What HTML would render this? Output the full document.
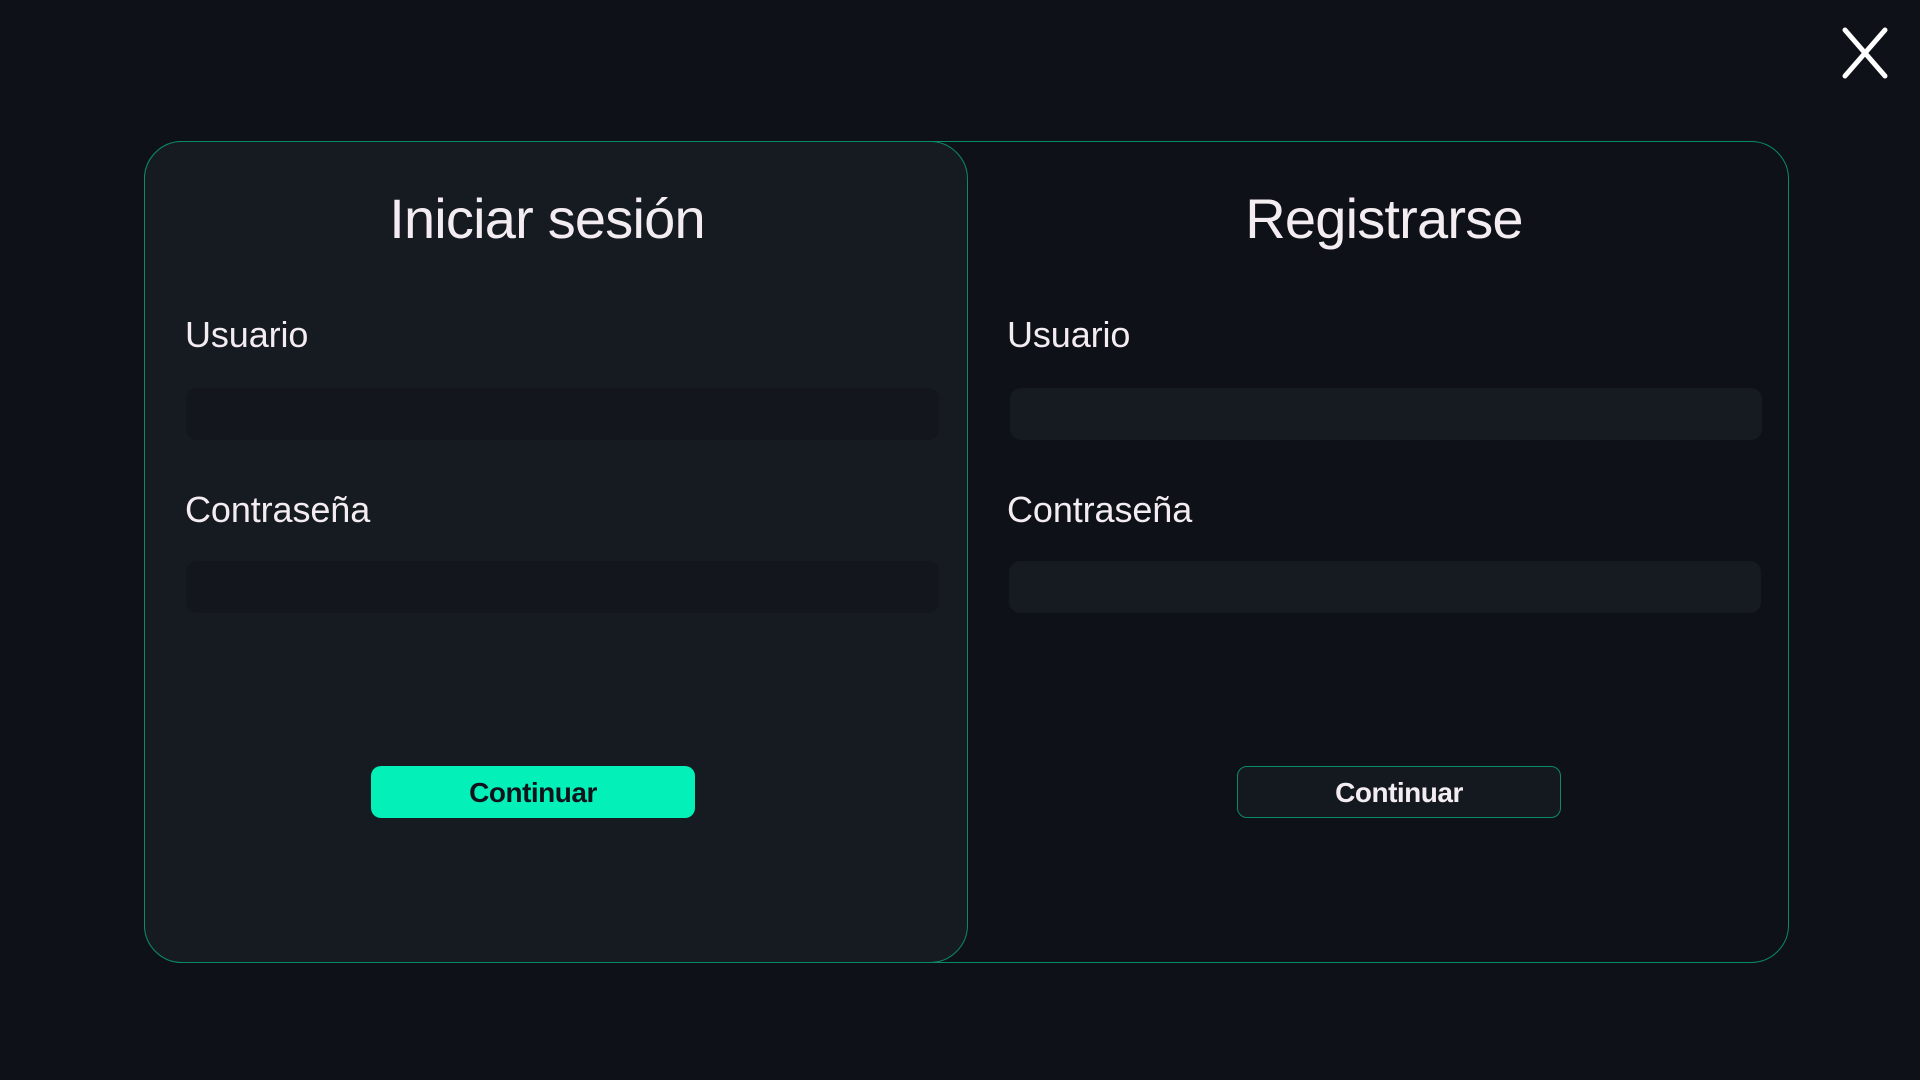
<!DOCTYPE html>
<html><head><meta charset="utf-8"><style>
*{margin:0;padding:0;box-sizing:border-box}
body{width:1920px;height:1080px;background:#0e1118;font-family:"Liberation Sans",sans-serif;color:#f3ecf1;position:relative;overflow:hidden}
.outer{position:absolute;left:144px;top:141px;width:1645px;height:822px;border:1.5px solid #0b8a66;border-radius:38px}
.left{position:absolute;left:144px;top:141px;width:824px;height:822px;background:#161a21;border:1.5px solid #0b8a66;border-radius:38px}
.t{position:absolute;font-size:56px;transform:translateX(-50%);white-space:nowrap;top:186px;letter-spacing:-0.8px}
.l{position:absolute;font-size:36px;white-space:nowrap;letter-spacing:-0.1px}
.in{position:absolute;height:52px;border-radius:11px}
.btn{position:absolute;width:324px;height:52px;border-radius:10px;font-weight:bold;font-size:28px;text-align:center;line-height:54px;letter-spacing:-0.5px}
</style></head><body>
<div class="outer"></div>
<div class="left"></div>
<div class="t" style="left:547px">Iniciar sesión</div>
<div class="t" style="left:1384px">Registrarse</div>
<div class="l" style="left:185px;top:314px">Usuario</div>
<div class="l" style="left:185px;top:489px">Contraseña</div>
<div class="l" style="left:1007px;top:314px">Usuario</div>
<div class="l" style="left:1007px;top:489px">Contraseña</div>
<div class="in" style="left:186px;top:388px;width:753px;background:#13161d"></div>
<div class="in" style="left:186px;top:561px;width:753px;background:#13161d"></div>
<div class="in" style="left:1010px;top:388px;width:752px;background:#161a21"></div>
<div class="in" style="left:1009px;top:561px;width:752px;background:#161a21"></div>
<div class="btn" style="left:371px;top:766px;background:#03f0b9;color:#10141a">Continuar</div>
<div class="btn" style="left:1237px;top:766px;background:#141920;border:1.5px solid #0b8a66;color:#f3ecf1;line-height:51px">Continuar</div>
<svg style="position:absolute;left:1840px;top:26px" width="50" height="54" viewBox="0 0 50 54"><path d="M5 4 L45 50 M45 4 L5 50" stroke="#fff" stroke-width="5" stroke-linecap="round"/></svg>
</body></html>
